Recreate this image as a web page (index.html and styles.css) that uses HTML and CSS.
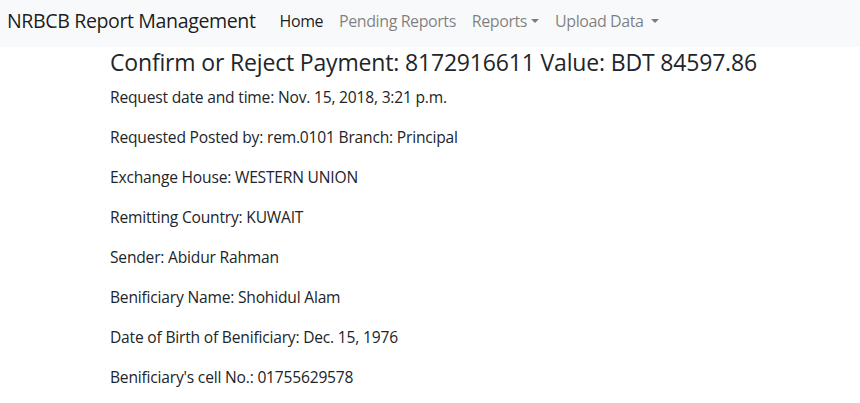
FILE: index.html
```html
<!DOCTYPE html>
<html lang="en">
<head>
<meta charset="utf-8">
<title>NRBCB Report Management</title>
<link rel="stylesheet" href="styles.css">
</head>
<body>
<nav class="navbar">
  <a class="brand" href="#">NRBCB Report Management</a>
  <ul class="nav">
    <li><a class="nav-link active" href="#">Home</a></li>
    <li><a class="nav-link" href="#">Pending Reports</a></li>
    <li><a class="nav-link dropdown" href="#">Reports</a></li>
    <li><a class="nav-link dropdown" href="#">Upload Data </a></li>
  </ul>
</nav>
<main class="content">
  <h4 class="title">Confirm or Reject Payment: 8172916611 Value: BDT 84597.86</h4>
  <p>Request date and time: Nov. 15, 2018, 3:21 p.m.</p>
  <p>Requested Posted by: rem.0101 Branch: Principal</p>
  <p>Exchange House: WESTERN UNION</p>
  <p>Remitting Country: KUWAIT</p>
  <p>Sender: Abidur Rahman</p>
  <p>Benificiary Name: Shohidul Alam</p>
  <p>Date of Birth of Benificiary: Dec. 15, 1976</p>
  <p>Benificiary's cell No.: 01755629578</p>
</main>
</body>
</html>
```
FILE: styles.css
```css
* { box-sizing: border-box; }
body {
  margin: 0;
  font-family: "Open Sans", "Noto Sans", sans-serif;
  font-size: 15.6px;
  line-height: 24px;
  color: #212529;
  background: #fff;
  letter-spacing: -0.2px;
}
.navbar {
  display: flex;
  align-items: center;
  height: 47px;
  padding: 1px 7px 6px;
  background: #f8f9fa;
}
.brand {
  font-size: 19.6px;
  line-height: 30px;
  padding: 5px 0;
  margin-right: 16px;
  color: rgba(0, 0, 0, 0.9);
  text-decoration: none;
  letter-spacing: -0.4px;
  white-space: nowrap;
}
.nav {
  display: flex;
  list-style: none;
  margin: 0;
  padding: 0;
}
.nav-link {
  display: block;
  padding: 8px 8px;
  font-size: 16px;
  letter-spacing: -0.42px;
  color: rgba(0, 0, 0, 0.5);
  text-decoration: none;
  white-space: pre;
}
.nav-link.active { color: rgba(0, 0, 0, 0.9); }
.dropdown::after {
  content: "";
  display: inline-block;
  margin-left: 4px;
  vertical-align: 4px;
  border-top: 4.8px solid;
  border-left: 4.8px solid transparent;
  border-right: 4.8px solid transparent;
}
.content {
  padding: 1px 0 0 110px;
}
.title {
  margin: 0 0 8px;
  font-size: 23px;
  font-weight: 400;
  line-height: 28.8px;
  letter-spacing: -0.17px;
}
.content p {
  margin: 0 0 16px;
}
```
